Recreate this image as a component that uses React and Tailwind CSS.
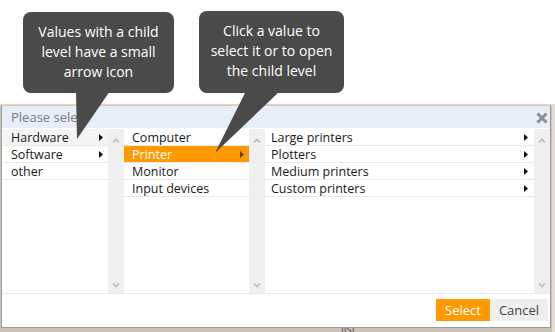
import React from "react";

const levelOne = [
  { label: "Hardware", child: true, active: true },
  { label: "Software", child: true },
  { label: "other" },
];

const levelTwo = [
  { label: "Computer" },
  { label: "Printer", child: true, selected: true },
  { label: "Monitor" },
  { label: "Input devices" },
];

const levelThree = [
  { label: "Large printers", child: true },
  { label: "Plotters", child: true },
  { label: "Medium printers", child: true },
  { label: "Custom printers", child: true },
];

const Arrow = ({ white }) => (
  <svg width="4" height="7" viewBox="0 0 4 7">
    <polygon points="0,0 4,3.5 0,7" fill={white ? "#6b3d00" : "#111"} />
  </svg>
);

const Scroller = () => (
  <div className="w-[16px] shrink-0 bg-[#efefef] flex flex-col items-center justify-between pt-[9px] pb-[5px]">
    <svg width="8" height="5" viewBox="0 0 8 5">
      <polyline points="1,4.5 4,1.5 7,4.5" fill="none" stroke="#c4c4c4" strokeWidth="2" />
    </svg>
    <svg width="8" height="5" viewBox="0 0 8 5">
      <polyline points="1,0.5 4,3.5 7,0.5" fill="none" stroke="#c4c4c4" strokeWidth="2" />
    </svg>
  </div>
);

const Column = ({ items, width, textPad, arrowPad }) => (
  <div className={`${width} shrink-0 flex flex-col`}>
    {items.map((item) => (
      <div
        key={item.label}
        className={`h-[17px] flex items-center justify-between border-b border-[#e9e9e9] ${textPad} ${arrowPad} ${
          item.selected
            ? "bg-[#ff9900] text-white"
            : item.active
            ? "bg-[#f4f4f4] text-[#1a1a1a]"
            : "text-[#1a1a1a]"
        }`}
      >
        <span className="leading-[17px]">{item.label}</span>
        {item.child && <Arrow white={item.selected} />}
      </div>
    ))}
  </div>
);

const Callout = ({ lines, className }) => (
  <div
    className={`bg-[#4a4a4a] rounded-[8px] flex flex-col items-center justify-center text-white text-[14px] leading-[20px] pb-[2px] ${className}`}
  >
    {lines.map((l) => (
      <span key={l}>{l}</span>
    ))}
  </div>
);

export default function App() {
  return (
    <div className="relative w-[555px] h-[332px] overflow-hidden bg-white font-['Open_Sans',sans-serif]">
      {/* tips */}
      <div className="flex h-[104px] items-start pt-[11px]">
        <Callout
          className="ml-[23px] mt-[1px] w-[151px] h-[81px]"
          lines={["Values with a child", "level have a small", "arrow icon"]}
        />
        <Callout
          className="ml-[25px] w-[145px] h-[82px]"
          lines={["Click a value to", "select it or to open", "the child level"]}
        />
      </div>

      <div className="bg-[#e6dccf] h-[228px] pl-[1px] pr-[4px] pt-[1px]">
        <div className="w-[550px] h-[223px] bg-white border border-[#9b9b9b] border-t-[#d9cbbb] flex flex-col shadow-[0_1px_2px_rgba(0,0,0,0.35)]">
          <div className="h-[22px] shrink-0 bg-[#e7eef8] flex items-center justify-between pl-[9px] pr-[2px]">
            <span className="text-[13px] text-[#7a7a7a] leading-none">Please select</span>
            <svg width="12" height="12" viewBox="0 0 12 12" className="mt-[1px]">
              <path d="M1.5 1.5 L10.5 10.5 M10.5 1.5 L1.5 10.5" stroke="#8e8e8e" strokeWidth="3" />
            </svg>
          </div>
          <div className="h-[166px] shrink-0 flex pl-[1px] pt-[1px] text-[12.5px] border-b border-[#e8e8e8]">
            <Column items={levelOne} width="w-[105px]" textPad="pl-[8px]" arrowPad="pr-[5px]" />
            <Scroller />
            <Column items={levelTwo} width="w-[125px]" textPad="pl-[8px]" arrowPad="pr-[5px]" />
            <Scroller />
            <Column items={levelThree} width="w-[269px]" textPad="pl-[6px]" arrowPad="pr-[6px]" />
            <Scroller />
          </div>
          <div className="flex-1 flex justify-end items-start pt-[5px] pr-[2px] text-[13px]">
            <button className="h-[22px] w-[54px] bg-[#ff9900] text-white leading-none">Select</button>
            <button className="h-[22px] w-[58px] bg-[#eeeeee] text-[#444] leading-none">Cancel</button>
          </div>
        </div>
        <div className="h-[4px] bg-[#cbc2b7] -mx-[1px] mt-[0px] overflow-hidden pl-[341px] text-[11px] leading-[8px] text-[#555]">
          <span className="relative -top-[3px]">list</span>
        </div>
      </div>

      <svg className="absolute inset-0 pointer-events-none" width="555" height="332">
        <polygon points="76,91 110,91 77,139" fill="#4a4a4a" />
        <polygon points="246,91 280,91 215,153" fill="#4a4a4a" />
      </svg>
    </div>
  );
}
